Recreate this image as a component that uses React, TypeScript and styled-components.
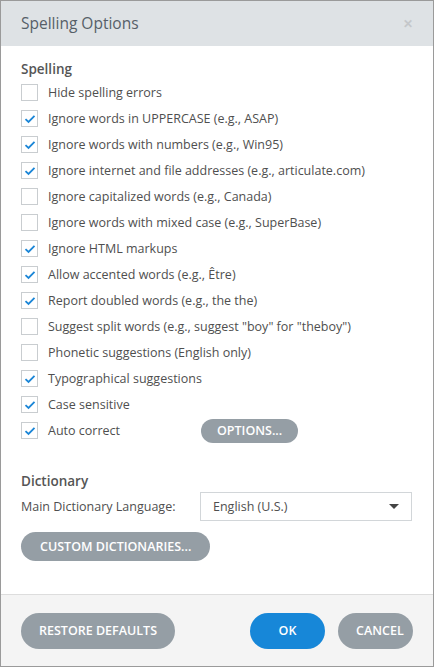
import React from 'react'
import styled, { createGlobalStyle } from 'styled-components'

const GlobalStyle = createGlobalStyle`
  html, body {
    margin: 0;
    padding: 0;
    background: #ffffff;
  }
  body {
    font-family: 'Open Sans', 'Liberation Sans', sans-serif;
  }
`

const options = [
  { label: 'Hide spelling errors', checked: false },
  { label: 'Ignore words in UPPERCASE (e.g., ASAP)', checked: true },
  { label: 'Ignore words with numbers (e.g., Win95)', checked: true },
  { label: 'Ignore internet and file addresses (e.g., articulate.com)', checked: true },
  { label: 'Ignore capitalized words (e.g., Canada)', checked: false },
  { label: 'Ignore words with mixed case (e.g., SuperBase)', checked: false },
  { label: 'Ignore HTML markups', checked: true },
  { label: 'Allow accented words (e.g., Être)', checked: true },
  { label: 'Report doubled words (e.g., the the)', checked: true },
  { label: 'Suggest split words (e.g., suggest "boy" for "theboy")', checked: false },
  { label: 'Phonetic suggestions (English only)', checked: false },
  { label: 'Typographical suggestions', checked: true },
  { label: 'Case sensitive', checked: true },
]

const Check = ({ checked }: { checked: boolean }) => (
  <Box>
    {checked && (
      <svg width="12" height="10" viewBox="0 0 12 10">
        <path d="M1.5 5.2 L4.5 8 L10.5 1.8" fill="none" stroke="#1b86d7" strokeWidth="1.8" />
      </svg>
    )}
  </Box>
)

const App = () => {
  return (
    <>
      <GlobalStyle />
      <Dialog>
        <Header>
          <Title>Spelling Options</Title>
          <Close>✕</Close>
        </Header>
        <Body>
          <SectionTitle>Spelling</SectionTitle>
          <List>
            {options.map((o) => (
              <Row key={o.label}>
                <Check checked={o.checked} />
                <Label>{o.label}</Label>
              </Row>
            ))}
            <Row>
              <Check checked />
              <Label $width="153px">Auto correct</Label>
              <PillButton>OPTIONS...</PillButton>
            </Row>
          </List>
          <SectionTitle $top="33px">Dictionary</SectionTitle>
          <LangRow>
            <Label $width="179px">Main Dictionary Language:</Label>
            <Select>
              <span>English (U.S.)</span>
              <Caret />
            </Select>
          </LangRow>
          <PillButton $tall>CUSTOM DICTIONARIES...</PillButton>
        </Body>
        <Footer>
          <FooterButton>RESTORE DEFAULTS</FooterButton>
          <Spacer />
          <FooterButton $primary $width="75px">OK</FooterButton>
          <FooterButton $width="75px">CANCEL</FooterButton>
        </Footer>
      </Dialog>
    </>
  )
}

const Dialog = styled.div`
  width: 434px;
  height: 667px;
  box-sizing: border-box;
  border: 1px solid #9a9a9a;
  display: flex;
  flex-direction: column;
  background: #ffffff;
  color: #4f4f4f;
`
const Header = styled.div`
  height: 45px;
  flex-shrink: 0;
  background: #dee2e5;
  display: flex;
  align-items: center;
  justify-content: space-between;
  padding: 0 20px 0 20px;
`
const Title = styled.div`
  font-size: 15.5px;
  color: #565f68;
  margin-top: -1px;
`
const Close = styled.div`
  font-size: 12px;
  color: #c4c7ca;
  font-weight: bold;
`
const Body = styled.div`
  flex: 1;
  padding: 14px 20px 0 20px;
  display: flex;
  flex-direction: column;
  align-items: flex-start;
`
const SectionTitle = styled.div<{ $top?: string }>`
  font-size: 13.5px;
  font-weight: 600;
  color: #555555;
  margin-top: ${(p) => p.$top || '0'};
  line-height: 18px;
`
const List = styled.div`
  display: flex;
  flex-direction: column;
  gap: 9px;
  margin-top: 6px;
`
const Row = styled.div`
  display: flex;
  align-items: center;
  height: 17px;
`
const Box = styled.div`
  width: 15px;
  height: 15px;
  border: 1px solid #c9cdd0;
  background: #ffffff;
  display: flex;
  align-items: center;
  justify-content: center;
  flex-shrink: 0;
  margin-right: 10px;
`
const Label = styled.span<{ $width?: string }>`
  font-size: 12.5px;
  color: #4f4f4f;
  white-space: nowrap;
  width: ${(p) => p.$width || 'auto'};
  flex-shrink: 0;
`
const PillButton = styled.button<{ $tall?: boolean }>`
  font-family: 'Open Sans', 'Liberation Sans', sans-serif;
  border: none;
  background: #959ea5;
  color: #ffffff;
  font-size: 12.5px;
  font-weight: 600;
  height: ${(p) => (p.$tall ? '29px' : '24px')};
  padding: 0 ${(p) => (p.$tall ? '19px' : '16px')};
  border-radius: 15px;
  cursor: pointer;
  margin-top: ${(p) => (p.$tall ? '11px' : '0')};
`
const LangRow = styled.div`
  display: flex;
  align-items: center;
  margin-top: 2px;
`
const Select = styled.div`
  width: 212px;
  height: 29px;
  box-sizing: border-box;
  border: 1px solid #d2d6d9;
  display: flex;
  align-items: center;
  justify-content: space-between;
  padding: 0 12px;
  font-size: 12.5px;
  color: #4f4f4f;
`
const Caret = styled.div`
  width: 0;
  height: 0;
  border-left: 5px solid transparent;
  border-right: 5px solid transparent;
  border-top: 5px solid #444444;
`
const Footer = styled.div`
  height: 71px;
  flex-shrink: 0;
  background: #f4f4f4;
  border-top: 1px solid #dddddd;
  display: flex;
  align-items: center;
  padding: 0 20px;
  gap: 13px;
`
const Spacer = styled.div`
  flex: 1;
`
const FooterButton = styled.button<{ $primary?: boolean; $width?: string }>`
  font-family: 'Open Sans', 'Liberation Sans', sans-serif;
  border: none;
  height: 36px;
  border-radius: 18px;
  padding: 0 18px;
  width: ${(p) => p.$width || 'auto'};
  background: ${(p) => (p.$primary ? '#1787d8' : '#959ea5')};
  color: #ffffff;
  font-size: 12.5px;
  font-weight: 600;
  cursor: pointer;
`

export default App
